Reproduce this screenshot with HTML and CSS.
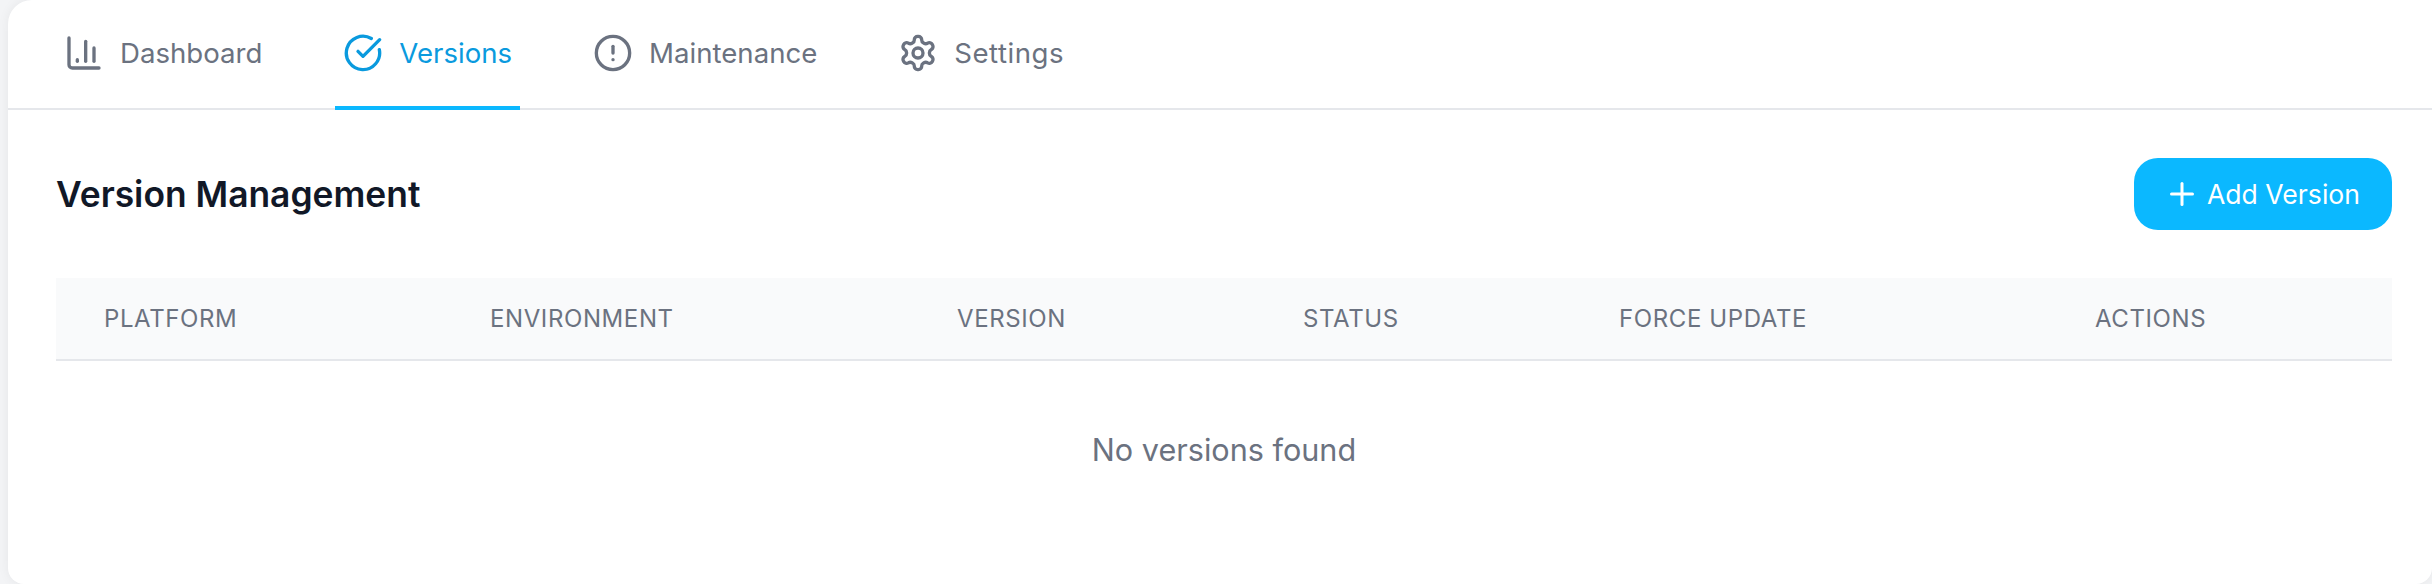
FILE: index.html
```html
<!DOCTYPE html>
<html>
<head>
    <title>Version Management</title>
    <link rel="stylesheet" href="styles.css">
</head>
<body>
    <div class="card">
        <nav class="tabs">
            <a class="tab">
                <svg class="icon" viewBox="0 0 24 24"><path d="M3 3v16a2 2 0 0 0 2 2h16"/><path d="M8 17v-1"/><path d="M13 17V5"/><path d="M18 17V9"/></svg>
                Dashboard
            </a>
            <a class="tab active">
                <svg class="icon" viewBox="0 0 24 24"><path d="M21.8 10A10 10 0 1 1 17 3.3"/><path d="m9 11 3 3L22 4"/></svg>
                Versions
            </a>
            <a class="tab">
                <svg class="icon" viewBox="0 0 24 24"><circle cx="12" cy="12" r="10"/><path d="M12 8v4"/><path d="M12 16h.01"/></svg>
                Maintenance
            </a>
            <a class="tab tab-settings">
                <svg class="icon" viewBox="0 0 24 24"><path d="M12.22 2h-.44a2 2 0 0 0-2 2v.18a2 2 0 0 1-1 1.73l-.43.25a2 2 0 0 1-2 0l-.15-.08a2 2 0 0 0-2.73.73l-.22.38a2 2 0 0 0 .73 2.73l.15.1a2 2 0 0 1 1 1.72v.51a2 2 0 0 1-1 1.74l-.15.09a2 2 0 0 0-.73 2.73l.22.38a2 2 0 0 0 2.73.73l.15-.08a2 2 0 0 1 2 0l.43.25a2 2 0 0 1 1 1.73V20a2 2 0 0 0 2 2h.44a2 2 0 0 0 2-2v-.18a2 2 0 0 1 1-1.73l.43-.25a2 2 0 0 1 2 0l.15.08a2 2 0 0 0 2.73-.73l.22-.39a2 2 0 0 0-.73-2.73l-.15-.08a2 2 0 0 1-1-1.74v-.5a2 2 0 0 1 1-1.74l.15-.09a2 2 0 0 0 .73-2.73l-.22-.38a2 2 0 0 0-2.73-.73l-.15.08a2 2 0 0 1-2 0l-.43-.25a2 2 0 0 1-1-1.73V4a2 2 0 0 0-2-2z"/><circle cx="12" cy="12" r="3"/></svg>
                Settings
            </a>
        </nav>

        <div class="content">
            <div class="header">
                <h2>Version Management</h2>
                <button class="add-btn" type="button">
                    <svg class="icon" viewBox="0 0 24 24"><path d="M5 12h14"/><path d="M12 5v14"/></svg>
                    Add Version
                </button>
            </div>

            <table class="versions">
                <thead>
                    <tr>
                        <th class="col-platform">Platform</th>
                        <th class="col-env">Environment</th>
                        <th class="col-version">Version</th>
                        <th class="col-status">Status</th>
                        <th class="col-force">Force Update</th>
                        <th class="col-actions">Actions</th>
                    </tr>
                </thead>
                <tbody>
                    <tr>
                        <td class="empty" colspan="6">No versions found</td>
                    </tr>
                </tbody>
            </table>
        </div>
    </div>
</body>
</html>
```

FILE: styles.css
```css
html,
body {
    height: 100%;
}
body {
    margin: 0;
    overflow: hidden;
    font-family: Inter, "Liberation Sans", sans-serif;
    background-color: #f3f4f6;
}
.card {
    box-sizing: border-box;
    height: 584px;
    margin-left: 8px;
    background-color: #fff;
    border-radius: 24px 0 16px 16px;
    box-shadow: 0 0 12px rgba(0, 0, 0, 0.06);
}
.tabs {
    display: flex;
    gap: 65px;
    height: 108px;
    padding-left: 48px;
    border-bottom: 2px solid #e5e7eb;
}
.tab {
    display: flex;
    align-items: center;
    gap: 16px;
    height: 106px;
    padding: 0 8px;
    border-bottom: 4px solid transparent;
    font-size: 27.6px;
    color: #6b7280;
}
.tab.active {
    color: #0a9ade;
    border-bottom-color: #0bb8ff;
}
.tab-settings {
    letter-spacing: 0.5px;
}
.icon {
    width: 40px;
    height: 40px;
    fill: none;
    stroke: currentColor;
    stroke-width: 2;
    stroke-linecap: round;
    stroke-linejoin: round;
}
.content {
    padding: 48px 40px 0 48px;
}
.header {
    display: flex;
    justify-content: space-between;
    align-items: center;
    margin-bottom: 48px;
}
h2 {
    margin: 0;
    font-size: 35.4px;
    font-weight: 600;
    color: #111827;
}
.add-btn {
    display: flex;
    align-items: center;
    gap: 7px;
    height: 72px;
    padding: 0 32px 0 30px;
    background-color: #0bb8ff;
    color: #fff;
    border: none;
    border-radius: 24px;
    font-family: inherit;
    font-size: 26.6px;
}
.add-btn .icon {
    width: 36px;
    height: 36px;
}
.versions {
    width: 100%;
    border-collapse: collapse;
    table-layout: fixed;
}
th {
    box-sizing: border-box;
    height: 82px;
    padding: 0 0 0 48px;
    background-color: #f9fafb;
    border-bottom: 2px solid #e5e7eb;
    text-align: left;
    font-size: 24px;
    font-weight: 400;
    letter-spacing: 0.6px;
    text-transform: uppercase;
    color: #6b7280;
}
.col-platform { width: 386px; }
.col-env { width: 467px; }
.col-version { width: 346px; }
.col-status { width: 316px; }
.col-force { width: 476px; }
.empty {
    height: 174px;
    text-align: center;
    font-size: 30.6px;
    color: #6b7280;
}
```
